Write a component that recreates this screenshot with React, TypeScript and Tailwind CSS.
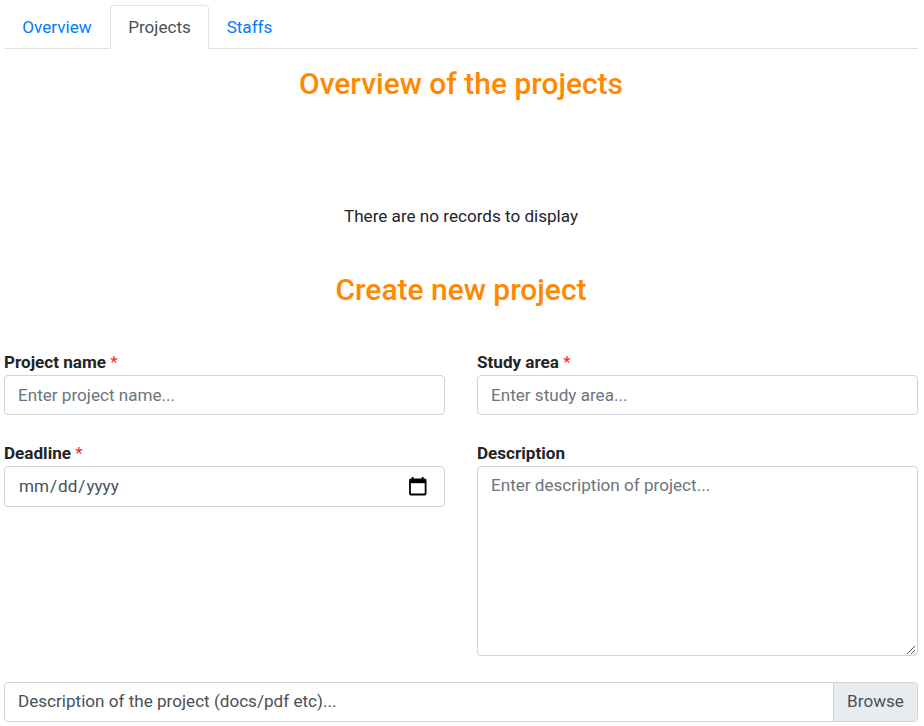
import type { ReactNode } from "react";

const field =
  "block w-full rounded-[4px] border border-[#ced4da] bg-white px-[13px] text-[17.1px] tracking-normal text-[#495057] placeholder:text-[#6c757d] placeholder:opacity-100 outline-none";

function Label({ children, required = false }: { children: ReactNode; required?: boolean }) {
  return (
    <div className="h-[26px] text-[17.1px] leading-[26px] font-bold">
      {children}
      {required && <span className="font-normal text-[#f92b20]"> *</span>}
    </div>
  );
}

function CalendarIcon() {
  return (
    <svg className="pointer-events-none absolute top-[11px] right-[18px] h-[19px] w-[18px]" viewBox="0 0 18 19" fill="none">
      <path d="M3.7 0v3M13.7 0v3" stroke="#000" strokeWidth="1.8" />
      <rect x="1" y="2.3" width="15.6" height="15.2" rx="0.8" stroke="#000" strokeWidth="1.8" />
      <path d="M1 2h15.6v4.2H1z" fill="#000" />
    </svg>
  );
}

function ResizeGrip() {
  return (
    <svg className="pointer-events-none absolute right-[2px] bottom-[2px] h-[9px] w-[9px]" viewBox="0 0 9 9" shapeRendering="crispEdges" fill="#555">
      {[0, 1, 2, 3, 4, 5, 6, 7].map((i) => (
        <rect key={i} x={i} y={8 - i} width="1" height="1" />
      ))}
      {[0, 1, 2, 3].map((i) => (
        <rect key={i} x={4 + i} y={8 - i} width="1" height="1" />
      ))}
    </svg>
  );
}

export default function App() {
  return (
    <div className="h-[726px] w-[924px] overflow-hidden bg-white pt-[5px] pr-[6px] pl-1 font-['Roboto',sans-serif] text-[17.1px] leading-[26px] text-[#212529]">
      <nav className="flex h-11 border-b border-[#dee2e6] text-[#007bff]">
        <a className="w-[106px] pt-[9px] text-center">Overview</a>
        <a className="h-11 w-[99px] rounded-t-[4px] border border-b-white border-[#dee2e6] bg-white pt-2 text-center text-[#495057]">Projects</a>
        <a className="w-[81px] pt-[9px] text-center">Staffs</a>
      </nav>
      <h1 className="mt-[17px] h-9 text-center text-[29.95px] leading-9 font-medium text-[#ff8800]">Overview of the projects</h1>
      <p className="mt-[101px] h-[26px] text-center">There are no records to display</p>
      <h2 className="mt-[43px] h-9 text-center text-[29.95px] leading-9 font-medium text-[#ff8800]">Create new project</h2>
      <form>
        <div className="mt-[41px] grid grid-cols-2 gap-x-8">
          <div>
            <Label required>Project name</Label>
            <input className={`${field} h-10`} placeholder="Enter project name..." />
          </div>
          <div>
            <Label required>Study area</Label>
            <input className={`${field} h-10`} placeholder="Enter study area..." />
          </div>
        </div>
        <div className="mt-[25px] grid grid-cols-2 gap-x-8">
          <div>
            <Label required>Deadline</Label>
            <div className="relative">
              <input type="date" className={`${field} h-[41px] pb-[2px] [&::-webkit-calendar-picker-indicator]:opacity-0`} />
              <CalendarIcon />
            </div>
          </div>
          <div>
            <Label>Description</Label>
            <div className="relative">
              <textarea className={`${field} h-[190px] resize-none py-[5px] leading-[26px]`} placeholder="Enter description of project..." />
              <ResizeGrip />
            </div>
          </div>
        </div>
        <label className="mt-[26px] flex h-10 overflow-hidden rounded-[4px] border border-[#ced4da] leading-[36px] text-[#495057]">
          <span className="flex-1 pl-[13px]">Description of the project (docs/pdf etc)...</span>
          <span className="w-[84px] border-l border-[#ced4da] bg-[#e9ecef] text-center">Browse</span>
        </label>
      </form>
    </div>
  );
}
